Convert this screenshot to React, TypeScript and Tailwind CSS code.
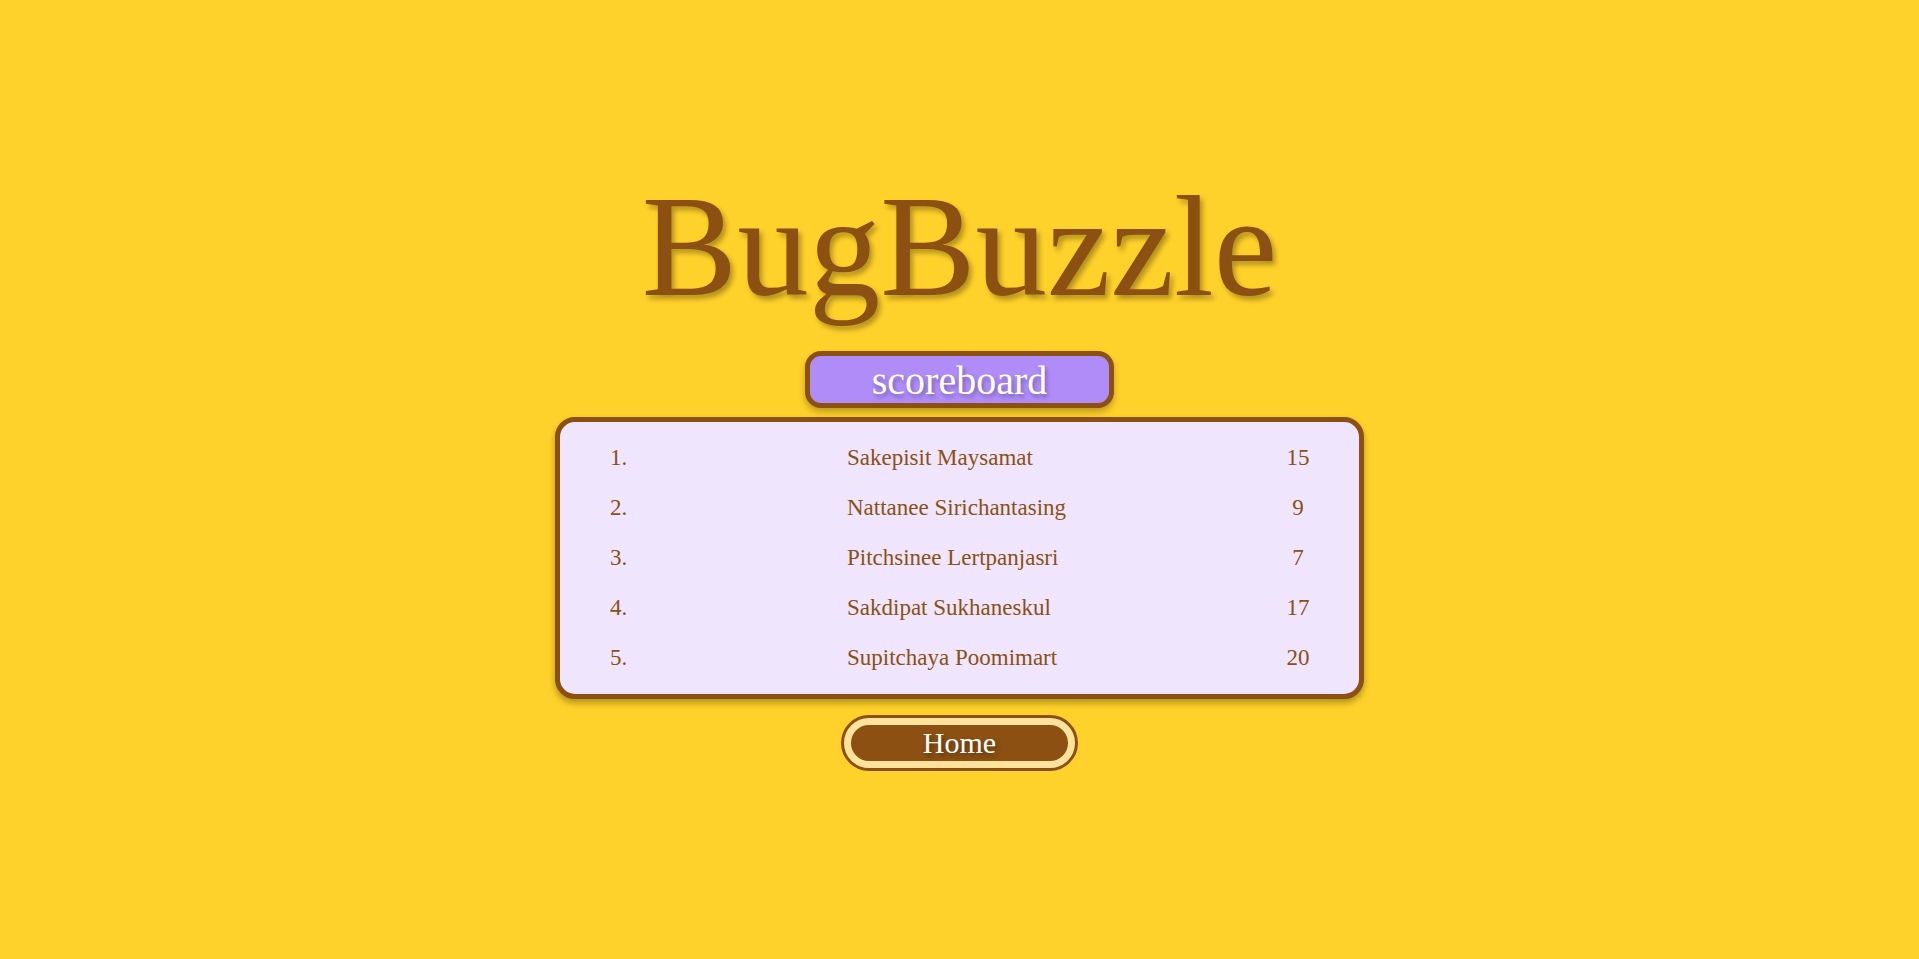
const scores = [
  { rank: 1, name: 'Sakepisit Maysamat', score: 15 },
  { rank: 2, name: 'Nattanee Sirichantasing', score: 9 },
  { rank: 3, name: 'Pitchsinee Lertpanjasri', score: 7 },
  { rank: 4, name: 'Sakdipat Sukhaneskul', score: 17 },
  { rank: 5, name: 'Supitchaya Poomimart', score: 20 },
];

export default function App() {
  return (
    <div className="min-h-screen w-full bg-[#ffd12a] flex flex-col items-center pt-[176px] font-['Liberation_Serif','Times_New_Roman',serif]">
      <h1 className="text-[143px] leading-[143px] text-[#8b5012] [text-shadow:3px_4px_5px_rgba(0,0,0,0.3)]">BugBuzzle</h1>

      <div className="mt-[32px] w-[309px] h-[57px] rounded-[16px] border-[5px] border-[#8b5012] bg-[#b08cf8] flex items-center justify-center shadow-[0_4px_6px_rgba(0,0,0,0.25)]">
        <span className="text-[40px] leading-none text-white pt-[2px] [text-shadow:2px_3px_4px_rgba(0,0,0,0.3)]">scoreboard</span>
      </div>

      <div className="mt-[9px] w-[809px] rounded-[20px] border-[5px] border-[#8b5012] bg-[#efe6fe] py-[11px] pl-[50px] pr-[21px] shadow-[0_4px_6px_rgba(0,0,0,0.3)]">
        {scores.map((s) => (
          <div key={s.rank} className="grid grid-cols-[237px_1fr_80px] h-[50px] items-center text-[23px] text-[#8b5012]">
            <span>{s.rank}.</span>
            <span>{s.name}</span>
            <span className="text-center">{s.score}</span>
          </div>
        ))}
      </div>

      <div className="mt-[16px] w-[237px] h-[56px] rounded-full border-[3px] border-[#8b5012] bg-[#ffe29b] p-[7px]">
        <div className="h-full w-full rounded-full bg-[#8b5012] flex items-center justify-center">
          <span className="text-[30px] leading-none text-white [text-shadow:2px_3px_4px_rgba(0,0,0,0.35)]">Home</span>
        </div>
      </div>
    </div>
  );
}
